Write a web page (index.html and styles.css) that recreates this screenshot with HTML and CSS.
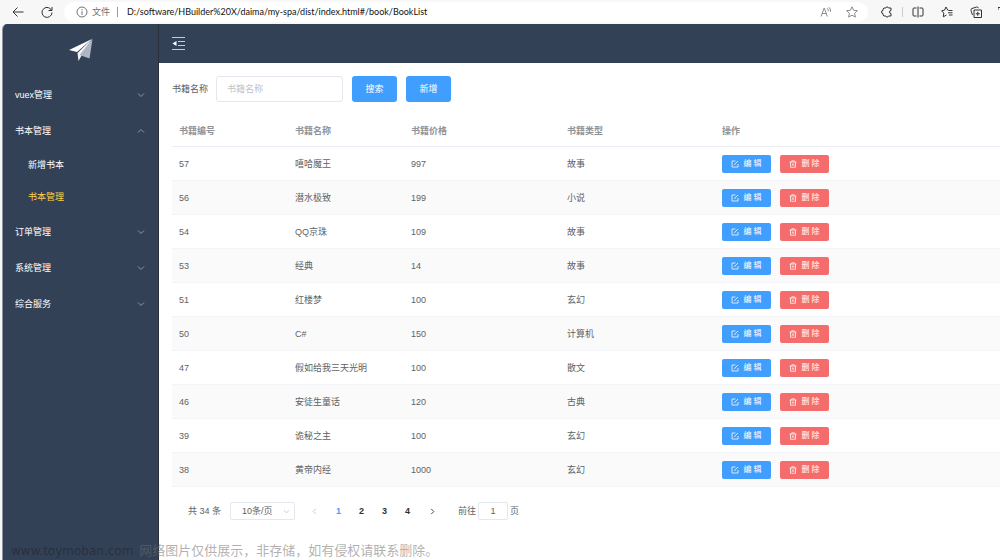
FILE: index.html
```html
<!DOCTYPE html>
<html lang="zh-CN">
<head>
<meta charset="utf-8">
<title>书本管理</title>
<link rel="stylesheet" href="styles.css">
</head>
<body>
<svg class="sprite" aria-hidden="true">
  <symbol id="down" viewBox="0 0 8 8"><path d="M1 2.5 4 5.5 7 2.5"/></symbol>
  <symbol id="up" viewBox="0 0 8 8"><path d="M1 5.5 4 2.5 7 5.5"/></symbol>
  <symbol id="edit" viewBox="0 0 16 16"><path d="M9 2H2v12h12V8M14 2 8 8l-1 2"/></symbol>
  <symbol id="trash" viewBox="0 0 16 16"><path d="M1 4h14M5.500 4V1.500h5V4M3 4v10.500h10V4M6.500 7v4.500M9.500 7v4.500"/></symbol>
</svg>

<header class="browser">
  <button class="nav-btn" aria-label="后退"><svg class="i12" viewBox="0 0 12 12"><path d="M11.500 6H1M5.500 1.500 1 6l4.500 4.500"/></svg></button>
  <button class="nav-btn" aria-label="刷新"><svg class="i12" viewBox="0 0 12 12"><path d="M10.800 5A5 5 0 1 0 11 6.500M11 1v3.500H7.500"/></svg></button>
  <div class="address">
    <svg class="i12 muted" viewBox="0 0 12 12"><circle cx="6" cy="6" r="5"/><path d="M6 5.200V9M6 3v1.200"/></svg>
    <span class="scheme">文件</span>
    <span class="bar"></span>
    <span class="url">D:/software/HBuilder%20X/daima/my-spa/dist/index.html#/book/BookList</span>
    <svg class="i12 pale" viewBox="0 0 12 12"><path d="M1 10.500 4.200 2l3.200 8.500M2.200 7.500h4M7 2.200q1.500 1 1.200 3M8.800 1.200q2.200 1.500 1.700 4.500"/></svg>
    <svg class="i12 star pale" viewBox="0 0 12 12"><path d="M6 .8 7.600 4.300l3.800.4-2.800 2.600.8 3.800L6 9.200l-3.400 1.900.8-3.800L.6 4.700l3.800-.4z"/></svg>
  </div>
  <div class="tools">
    <svg class="i12" viewBox="0 0 12 12"><path d="M3 2h1.800a1.400 1.400 0 0 1 2.700 0H10v2.500a1.500 1.500 0 0 0 0 3V10H7.500a1.400 1.400 0 0 1-2.700 0H3L2 9V7.500a1.500 1.500 0 0 1 0-3V3z"/></svg>
    <span class="tool-bar"></span>
    <svg class="i12" viewBox="0 0 12 12"><path d="M4.500 2H2Q1 2 1 3v6q0 1 1 1h2.500M6 .5v11M7.500 2H10q1 0 1 1v6q0 1-1 1H7.500"/></svg>
    <svg class="i12 fav" viewBox="0 0 12 12"><path d="M7.500 4.200 6.600 4 5 1 3.500 4.200.6 4.800l2.200 2.300-.5 3.700L5.500 9M7.500 4.500h4M7 6.800h4.500M8 9h3.500"/></svg>
    <svg class="i12 coll" viewBox="0 0 12 12"><path d="M4 4h7.500v7.500H4zM7.750 5.800v4M5.750 7.750h4M2.500 9 1 4.500Q.5 3 2 2.500L6.500 1Q8 .7 8.500 2.200"/></svg>
    <svg class="edge" viewBox="0 0 2 12"><path d="M2 1.500H0V4"/></svg>
  </div>
</header>

<div class="app">
  <aside class="side">
    <div class="logo">
      <svg viewBox="0 0 26 24"><path class="wing" d="M1 12 24 1 9 14z"/><path class="tail" d="M9.500 15 24 1 13 18.500 10.500 23z"/><path class="fold" d="M24.500 1 21.500 20.500 11.500 17z"/></svg>
    </div>
    <nav>
      <a class="item" href="#vuex">vuex管理<svg><use href="#down"/></svg></a>
      <a class="item" href="#book">书本管理<svg><use href="#up"/></svg></a>
      <div class="submenu">
        <a class="child" href="#add">新增书本</a>
        <a class="child active" href="#list">书本管理</a>
      </div>
      <a class="item" href="#order">订单管理<svg><use href="#down"/></svg></a>
      <a class="item" href="#system">系统管理<svg><use href="#down"/></svg></a>
      <a class="item" href="#service">综合服务<svg><use href="#down"/></svg></a>
    </nav>
  </aside>
  <div class="content">
    <header class="topbar">
      <button class="fold-btn" aria-label="收起菜单"><svg viewBox="0 0 13 13"><path d="M0 .5h13M6 4.500h7M6 8.500h7M0 12.500h13"/><path class="tri" d="M4.500 4v5L.5 6.500z"/></svg></button>
    </header>
    <main>
      <form class="search">
        <label for="name">书籍名称</label>
        <input id="name" type="text" placeholder="书籍名称">
        <button type="button" class="btn">搜索</button>
        <button type="button" class="btn">新增</button>
      </form>
      <table>
        <colgroup><col class="c1"><col class="c1"><col class="c2"><col class="c2"><col></colgroup>
        <thead><tr><th>书籍编号</th><th>书籍名称</th><th>书籍价格</th><th>书籍类型</th><th>操作</th></tr></thead>
        <tbody>
          <tr><td>57</td><td>嘻哈魔王</td><td>997</td><td>故事</td><td><div class="ops"><button class="mini"><svg><use href="#edit"/></svg>编 辑</button><button class="mini del"><svg><use href="#trash"/></svg>删 除</button></div></td></tr>
          <tr><td>56</td><td>潜水极致</td><td>199</td><td>小说</td><td><div class="ops"><button class="mini"><svg><use href="#edit"/></svg>编 辑</button><button class="mini del"><svg><use href="#trash"/></svg>删 除</button></div></td></tr>
          <tr><td>54</td><td>QQ京珠</td><td>109</td><td>故事</td><td><div class="ops"><button class="mini"><svg><use href="#edit"/></svg>编 辑</button><button class="mini del"><svg><use href="#trash"/></svg>删 除</button></div></td></tr>
          <tr><td>53</td><td>经典</td><td>14</td><td>故事</td><td><div class="ops"><button class="mini"><svg><use href="#edit"/></svg>编 辑</button><button class="mini del"><svg><use href="#trash"/></svg>删 除</button></div></td></tr>
          <tr><td>51</td><td>红楼梦</td><td>100</td><td>玄幻</td><td><div class="ops"><button class="mini"><svg><use href="#edit"/></svg>编 辑</button><button class="mini del"><svg><use href="#trash"/></svg>删 除</button></div></td></tr>
          <tr><td>50</td><td>C#</td><td>150</td><td>计算机</td><td><div class="ops"><button class="mini"><svg><use href="#edit"/></svg>编 辑</button><button class="mini del"><svg><use href="#trash"/></svg>删 除</button></div></td></tr>
          <tr><td>47</td><td>假如给我三天光明</td><td>100</td><td>散文</td><td><div class="ops"><button class="mini"><svg><use href="#edit"/></svg>编 辑</button><button class="mini del"><svg><use href="#trash"/></svg>删 除</button></div></td></tr>
          <tr><td>46</td><td>安徒生童话</td><td>120</td><td>古典</td><td><div class="ops"><button class="mini"><svg><use href="#edit"/></svg>编 辑</button><button class="mini del"><svg><use href="#trash"/></svg>删 除</button></div></td></tr>
          <tr><td>39</td><td>诡秘之主</td><td>100</td><td>玄幻</td><td><div class="ops"><button class="mini"><svg><use href="#edit"/></svg>编 辑</button><button class="mini del"><svg><use href="#trash"/></svg>删 除</button></div></td></tr>
          <tr><td>38</td><td>黄帝内经</td><td>1000</td><td>玄幻</td><td><div class="ops"><button class="mini"><svg><use href="#edit"/></svg>编 辑</button><button class="mini del"><svg><use href="#trash"/></svg>删 除</button></div></td></tr>
        </tbody>
      </table>
      <div class="pager">
        <span>共 34 条</span>
        <div class="size">
          <select aria-label="每页条数"><option>10条/页</option><option>20条/页</option></select>
          <svg><use href="#down"/></svg>
        </div>
        <div class="pages">
          <button class="prev" aria-label="上一页"><svg viewBox="0 0 8 8"><path d="M5.500 1 2.500 4l3 3"/></svg></button>
          <button class="current">1</button>
          <button>2</button>
          <button>3</button>
          <button>4</button>
          <button class="next" aria-label="下一页"><svg viewBox="0 0 8 8"><path d="M2.500 1l3 3-3 3"/></svg></button>
        </div>
        <label class="jump">前往<input type="text" value="1">页</label>
      </div>
    </main>
  </div>
</div>
<p class="watermark"><span class="site">www.toymoban.com</span> 网络图片仅供展示，非存储，如有侵权请联系删除。</p>
</body>
</html>
```
FILE: styles.css
```css
* { box-sizing: border-box; }

body {
  margin: 0;
  height: 100vh;
  display: flex;
  flex-direction: column;
  position: relative;
  overflow: hidden;
  background: #f7f7f7;
  color: #606266;
  font: 9px/12px "Liberation Sans", "Noto Sans CJK SC", sans-serif;
}

button, input, select {
  font: inherit;
  color: inherit;
  margin: 0;
  padding: 0;
  border: 0;
  background: none;
}

a { color: inherit; text-decoration: none; }
svg { display: block; flex: none; fill: none; stroke: currentColor; }
.sprite { position: absolute; width: 0; height: 0; }

/* Browser bar */
.browser {
  flex: none;
  height: 24px;
  display: flex;
  align-items: center;
  padding-left: 12px;
  color: #333;
  font-family: Lato, "Noto Sans CJK SC", sans-serif;
}
.i12 { width: 12px; height: 12px; }
.nav-btn { margin-right: 17px; }
.nav-btn + .nav-btn { margin-right: 11px; }
.address {
  flex: 1;
  height: 20px;
  display: flex;
  align-items: center;
  padding: 0 10px 0 12px;
  border-radius: 10px;
  background: #fff;
}
.muted, .scheme { color: #707070; }
.pale { color: #8a8a8a; }
.scheme { margin-left: 4px; }
.bar { width: 1px; height: 10px; margin: 0 9px 0 7px; background: #999; }
.url { flex: 1; color: #111; }
.star { margin-left: 14px; }
.tools { display: flex; align-items: center; margin-left: 13px; }
.tool-bar { width: 1px; height: 10px; margin: 0 9px; background: #ccc; }
.fav { margin-left: 17px; }
.coll { margin-left: 17px; }
.edge { width: 2px; height: 12px; margin-left: 16px; }

/* Application frame */
.app {
  flex: 1;
  min-height: 0;
  display: flex;
  margin-left: 2px;
  border-left: 1px solid #8d949e;
  border-top-left-radius: 5px;
  overflow: hidden;
  background: #fff;
}
.side {
  flex: none;
  width: 156px;
  border-right: 1px solid #2b2f38;
  background: #334157;
  color: #fff;
}
.logo { height: 53px; display: flex; justify-content: center; padding-top: 14px; }
.logo svg { width: 26px; height: 24px; stroke: none; }
.wing { fill: #fff; }
.tail { fill: #f2f4f7; }
.fold { fill: #aeb6c4; }
.item {
  height: 36px;
  display: flex;
  align-items: center;
  justify-content: space-between;
  padding: 0 13px 0 12px;
}
.item svg { width: 8px; height: 8px; color: #8f98a7; }
.submenu { padding-bottom: 1px; }
.child { height: 32px; display: flex; align-items: center; padding-left: 25px; }
.active { color: #ffd04b; }

.content { flex: 1; min-width: 0; }
.topbar { height: 39px; display: flex; align-items: center; padding-left: 13px; background: #334157; }
.fold-btn { color: #c5cad3; }
.fold-btn svg { width: 13px; height: 13px; }
.tri { fill: #fff; stroke: none; }

main { padding: 13px 0 0 13px; }
.search { display: flex; align-items: center; gap: 9px; }
.search label { margin-right: -1px; }
.search input {
  width: 127px;
  height: 26px;
  padding: 0 10px;
  border: 1px solid #e4e7ed;
  border-radius: 3px;
}
.search input::placeholder { color: #c0c4cc; }
.btn { width: 45px; height: 26px; border-radius: 3px; background: #409eff; color: #fff; }

/* Book table */
table { width: 100%; margin-top: 13px; table-layout: fixed; border-collapse: separate; border-spacing: 0; }
.c1 { width: 116px; }
.c2 { width: 156px; }
col.c2 + col.c2 { width: 155px; }
th, td { padding: 0 0 0 7px; border-bottom: 1px solid #f3f4f7; text-align: left; }
th { height: 32px; border-color: #ebeef5; color: #909399; }
td { height: 34px; }
tbody tr:nth-child(even) { background: #fafafa; }
.ops { display: flex; gap: 9px; }
.mini {
  width: 49px;
  height: 18px;
  display: flex;
  align-items: center;
  justify-content: center;
  gap: 4px;
  border-radius: 2px;
  background: #409eff;
  color: #fff;
  font-size: 8px;
}
.mini svg { width: 8px; height: 8px; stroke-width: 1.5; }
.del { background: #f56c6c; }

/* Pagination */
.pager { display: flex; align-items: center; margin-top: 15px; padding-left: 16px; }
.size { display: grid; align-items: center; width: 65px; margin-left: 9px; }
.size select, .size svg { grid-area: 1 / 1; }
.size select {
  width: 100%;
  height: 18px;
  padding-left: 11px;
  border: 1px solid #e4e7ed;
  border-radius: 2px;
  appearance: none;
  background: #fff;
}
.size svg { width: 7px; height: 7px; justify-self: end; margin-right: 5px; color: #c0c4cc; pointer-events: none; }
.pages { display: flex; margin-left: 7px; color: #303133; font-weight: bold; }
.pages button { width: 23px; height: 18px; display: flex; align-items: center; justify-content: center; }
.pages svg { width: 7px; height: 7px; }
.pages .prev { width: 25px; color: #c0c4cc; }
.pages .next { width: 27px; }
.pages .current { color: #409eff; }
.jump { display: flex; align-items: center; gap: 2px; margin-left: 12px; }
.jump input { width: 30px; height: 18px; border: 1px solid #e4e7ed; border-radius: 2px; text-align: center; }

.watermark {
  position: absolute;
  left: 11px;
  bottom: 0;
  margin: 0;
  font: 13px/17px "Noto Sans CJK SC", sans-serif;
  color: rgba(110, 110, 110, .55);
  white-space: nowrap;
}
.site {
  margin-right: 3px;
  color: rgba(20, 20, 20, .4);
  font-family: "DejaVu Sans", sans-serif;
  font-size: 12px;
}
```
